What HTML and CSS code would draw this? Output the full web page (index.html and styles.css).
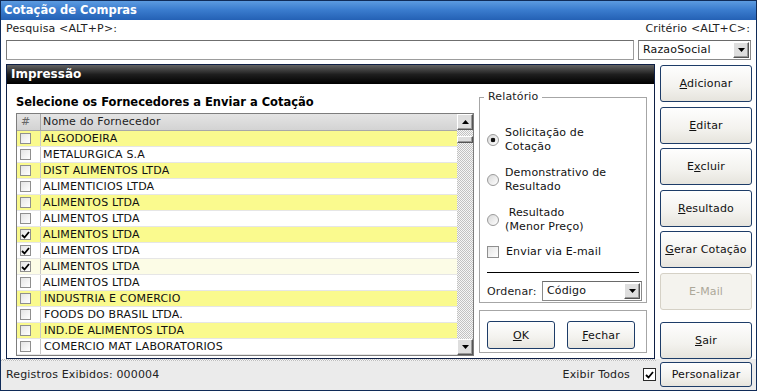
FILE: index.html
```html
<!DOCTYPE html>
<html lang="pt-BR">
<head>
  <meta charset="UTF-8">
  <title>Cotação de Compras</title>
  <link rel="stylesheet" href="styles.css">
</head>
<body>
  <div class="window">
    <div class="titlebar">Cotação de Compras</div>

    <div class="search">
      <div class="search-main">
        <label class="field-label">Pesquisa &lt;ALT+P&gt;:</label>
        <div class="textbox"></div>
      </div>
      <div class="search-crit">
        <label class="field-label right">Critério &lt;ALT+C&gt;:</label>
        <div class="combo">
          <span class="combo-text">RazaoSocial</span>
          <span class="bevel combo-btn"><svg width="7" height="4" viewBox="0 0 7 4"><path d="M0 0H7L3.5 4Z" fill="#000"/></svg></span>
        </div>
      </div>
    </div>

    <div class="main">
      <div class="panel">
        <div class="panel-head">Impressão</div>
        <div class="panel-body">
          <div class="suppliers">
            <div class="caption">Selecione os Fornecedores a Enviar a Cotação</div>
            <div class="grid">
              <div class="rows">
                <div class="row head"><span class="c-chk">#</span><span class="c-name">Nome do Fornecedor</span></div>
                <div class="row yellow"><span class="c-chk"><span class="chk"></span></span><span class="c-name">ALGODOEIRA</span></div>
                <div class="row"><span class="c-chk"><span class="chk"></span></span><span class="c-name">METALURGICA S.A</span></div>
                <div class="row yellow"><span class="c-chk"><span class="chk"></span></span><span class="c-name">DIST ALIMENTOS LTDA</span></div>
                <div class="row"><span class="c-chk"><span class="chk"></span></span><span class="c-name">ALIMENTICIOS LTDA</span></div>
                <div class="row yellow"><span class="c-chk"><span class="chk"></span></span><span class="c-name">ALIMENTOS LTDA</span></div>
                <div class="row"><span class="c-chk"><span class="chk"></span></span><span class="c-name">ALIMENTOS LTDA</span></div>
                <div class="row yellow"><span class="c-chk"><span class="chk"><svg width="9" height="8" viewBox="0 0 9 8"><path d="M1 4L3.5 6.5L8 1" fill="none" stroke="#000" stroke-width="1.8"/></svg></span></span><span class="c-name">ALIMENTOS LTDA</span></div>
                <div class="row"><span class="c-chk"><span class="chk"><svg width="9" height="8" viewBox="0 0 9 8"><path d="M1 4L3.5 6.5L8 1" fill="none" stroke="#000" stroke-width="1.8"/></svg></span></span><span class="c-name">ALIMENTOS LTDA</span></div>
                <div class="row current"><span class="c-chk"><span class="chk"><svg width="9" height="8" viewBox="0 0 9 8"><path d="M1 4L3.5 6.5L8 1" fill="none" stroke="#000" stroke-width="1.8"/></svg></span></span><span class="c-name">ALIMENTOS LTDA</span></div>
                <div class="row"><span class="c-chk"><span class="chk"></span></span><span class="c-name">ALIMENTOS LTDA</span></div>
                <div class="row yellow"><span class="c-chk"><span class="chk"></span></span><span class="c-name shifted">INDUSTRIA E COMERCIO</span></div>
                <div class="row"><span class="c-chk"><span class="chk"></span></span><span class="c-name shifted">FOODS DO BRASIL LTDA.</span></div>
                <div class="row yellow"><span class="c-chk"><span class="chk"></span></span><span class="c-name shifted">IND.DE ALIMENTOS LTDA</span></div>
                <div class="row"><span class="c-chk"><span class="chk"></span></span><span class="c-name shifted">COMERCIO MAT LABORATORIOS</span></div>
              </div>
              <div class="vscroll">
                <span class="bevel sb-btn"><svg width="7" height="4" viewBox="0 0 7 4"><path d="M0 4H7L3.5 0Z" fill="#000"/></svg></span>
                <span class="bevel sb-thumb"></span>
                <span class="bevel sb-btn sb-down"><svg width="7" height="4" viewBox="0 0 7 4"><path d="M0 0H7L3.5 4Z" fill="#000"/></svg></span>
              </div>
            </div>
          </div>

          <div class="report-col">
            <fieldset class="report">
              <legend>Relatório</legend>
              <div class="opt first"><span class="radio on"></span><span>Solicitação de<br>Cotação</span></div>
              <div class="opt"><span class="radio"></span><span>Demonstrativo de<br>Resultado</span></div>
              <div class="opt"><span class="radio"></span><span>&nbsp;Resultado<br>(Menor Preço)</span></div>
              <div class="opt check-opt"><span class="chk box12"></span><span>Enviar via E-mail</span></div>
              <div class="rule"></div>
              <div class="order">
                <span>Ordenar:</span>
                <div class="combo small">
                  <span class="combo-text">Código</span>
                  <span class="bevel combo-btn"><svg width="7" height="4" viewBox="0 0 7 4"><path d="M0 0H7L3.5 4Z" fill="#000"/></svg></span>
                </div>
              </div>
            </fieldset>
            <div class="actions">
              <button class="btn small-btn"><u>O</u>K</button>
              <button class="btn small-btn"><u>F</u>echar</button>
            </div>
          </div>
        </div>
      </div>

      <div class="side">
        <button class="btn side-btn"><u>A</u>dicionar</button>
        <button class="btn side-btn"><u>E</u>ditar</button>
        <button class="btn side-btn">E<u>x</u>cluir</button>
        <button class="btn side-btn"><u>R</u>esultado</button>
        <button class="btn side-btn"><u>G</u>erar Cotação</button>
        <button class="btn side-btn" disabled>E-Mail</button>
        <button class="btn side-btn exit"><u>S</u>air</button>
      </div>
    </div>

    <div class="status">
      <div class="status-info">
        <span>Registros Exibidos: 000004</span>
        <span class="show-all">Exibir Todos</span>
        <span class="chk box13"><svg width="9" height="8" viewBox="0 0 9 8"><path d="M1 4L3.5 6.5L8 1" fill="none" stroke="#000" stroke-width="1.8"/></svg></span>
      </div>
      <button class="btn custom-btn">Personalizar</button>
    </div>
  </div>
</body>
</html>
```

FILE: styles.css
```css
* { box-sizing: border-box; }
body { margin: 0; font-family: "DejaVu Sans", Verdana, sans-serif; font-size: 11px; letter-spacing: 0.15px; color: #111; }

.window { width: 757px; height: 391px; border: 1px solid #102b58; background: #fff; display: flex; flex-direction: column; }
.titlebar { height: 19px; line-height: 19px; padding-left: 3px; font-size: 11.5px; font-weight: bold; letter-spacing: 0; color: #fff; background: linear-gradient(#5c9be0, #3b7dcf 45%, #2461b5); }

/* search row */
.search { height: 44px; display: flex; gap: 4px; padding: 1px 5px 0 5px; }
.search-main { flex: 1; display: flex; flex-direction: column; }
.search-crit { width: 113px; display: flex; flex-direction: column; }
.field-label { line-height: 16px; margin-bottom: 3px; color: #222; }
.field-label.right { text-align: right; padding-right: 1px; }
.textbox { height: 20px; border: 1px solid #9c9c9c; border-top-color: #6f6f6f; border-left-color: #7c7c7c; background: #fff; }
.combo { height: 20px; display: flex; align-items: center; border: 1px solid #8a8a8a; border-top-color: #6a6a6a; background: #fff; padding: 1px; }
.combo-text { flex: 1; padding-left: 3px; line-height: 16px; color: #111; }
.combo-btn { width: 16px; height: 16px; display: flex; align-items: center; justify-content: center; }
.bevel { background: #dedede; border: 1px solid; border-color: #fff #555 #555 #fff; box-shadow: inset -1px -1px #9a9a9a; }

/* main area */
.main { height: 295px; display: flex; gap: 5px; padding-left: 5px; }
.panel { width: 649px; border: 1px solid #0e1f45; display: flex; flex-direction: column; }
.panel-head { height: 19px; line-height: 19px; padding-left: 4px; font-size: 12px; font-weight: bold; letter-spacing: 0; color: #fff; background: linear-gradient(#626262, #1e1e1e 50%, #000); }
.panel-body { flex: 1; display: flex; gap: 5px; padding: 6px 7px 0 9px; }

.suppliers { width: 458px; }
.caption { margin-top: 4px; margin-bottom: 3px; line-height: 16px; font-size: 11.5px; font-weight: bold; letter-spacing: 0; color: #000; }
.grid { height: 243px; border: 1px solid #7d7d7d; display: flex; }
.rows { flex: 1; overflow: hidden; }
.row { height: 16px; display: flex; border-bottom: 1px solid #e6e6e6; line-height: 15px; background: #fff; }
.row.yellow { background: #fafa8e; }
.row.current { background: #fcfce6; }
.row.head { height: 17px; line-height: 16px; background: linear-gradient(#e4e4e4, #d3d3d3); border-bottom: 1px solid #a8a8a8; }
.row.head .c-chk { color: #666; padding-left: 4px; border-right-color: #a8a8a8; }
.row.head .c-name { color: #222; }
.c-chk { width: 24px; border-right: 1px solid #c9c9c9; padding-left: 3px; display: flex; align-items: center; }
.c-name { padding-left: 2px; color: #111; white-space: pre; }
.c-name.shifted { padding-left: 3px; }

.chk { width: 11px; height: 11px; border: 1px solid #8f8f8f; background: linear-gradient(135deg, #e4e4e4, #fff); display: flex; align-items: center; justify-content: center; }
.chk.box12 { width: 12px; height: 12px; }
.chk.box13 { width: 13px; height: 13px; border-color: #2a2a2a; background: #fff; margin-left: 13px; }

.vscroll { width: 16px; display: flex; flex-direction: column; background: repeating-conic-gradient(#c2c2c2 0 25%, #f6f6f6 0 50%) 0 0 / 2px 2px; }
.sb-btn { width: 16px; height: 16px; display: flex; align-items: center; justify-content: center; }
.sb-thumb { height: 7px; margin-top: 6px; }
.sb-down { margin-top: auto; }

/* report options */
.report-col { width: 168px; }
.report { margin: 0; width: 168px; padding: 0 4px 1px 7px; border: 1px solid #a6a6a6; }
.report legend { margin-left: -3px; padding: 0 4px; line-height: 14px; color: #222; }
.opt { display: flex; align-items: center; gap: 6px; line-height: 14px; margin-top: 12px; color: #111; }
.opt.first { margin-top: 22px; }
.opt.check-opt { margin-top: 11px; gap: 7px; }
.radio { width: 12px; height: 12px; border-radius: 50%; border: 1px solid #9a9a9a; background: linear-gradient(135deg, #d8d8d8, #fff); flex-shrink: 0; }
.radio.on { background: radial-gradient(circle, #111 0 2px, transparent 2.6px), linear-gradient(135deg, #d8d8d8, #fff); }
.rule { height: 1px; margin: 13px 3px 0 0; background: #000; }
.order { display: flex; align-items: center; justify-content: space-between; margin-top: 8px; color: #222; }
.combo.small { width: 100px; }

.actions { margin-top: 7px; height: 43px; border: 1px solid #a6a6a6; display: flex; gap: 12px; padding: 10px 0 0 7px; }

/* buttons */
.btn { font-family: "DejaVu Sans", Verdana, sans-serif; font-size: 11px; letter-spacing: 0.15px; color: #111; border: 1px solid #1d3c68; border-radius: 3px; background: linear-gradient(#fefefe, #f3f2ee 60%, #e6e4dd); padding: 0; }
.btn u { text-underline-offset: 1px; }
.btn:disabled { color: #aca899; border-color: #d5d1c6; background: #f4f3ee; }
.small-btn { width: 68px; height: 28px; }
.side { width: 92px; display: flex; flex-direction: column; gap: 4.5px; padding-top: 1px; }
.side-btn { height: 37px; }
.side-btn.exit { margin-top: auto; }

/* status bar */
.status { height: 31px; display: flex; align-items: center; gap: 4px; padding-right: 4px; background: #ebebeb; }
.status-info { flex: 1; height: 31px; display: flex; align-items: center; padding-left: 5px; color: #222; background: repeating-conic-gradient(#bdbdbd 0 25%, #f4f4f4 0 50%) 0 0 / 2px 2px repeat-x, #ebebeb; }
.show-all { margin-left: auto; }
.custom-btn { width: 92px; height: 25px; }
```
